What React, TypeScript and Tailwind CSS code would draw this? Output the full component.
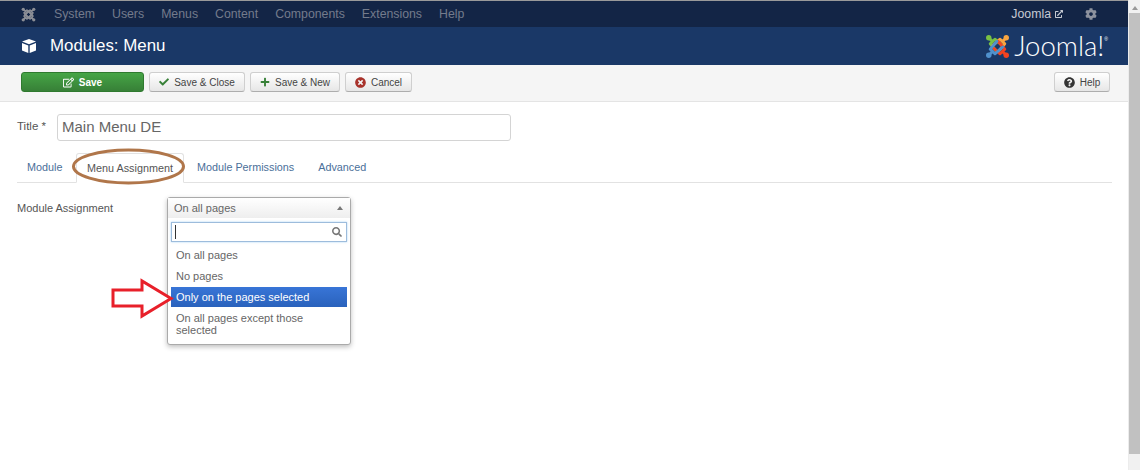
import React from "react";
import { FaCheck, FaPlus, FaSearch, FaCog, FaQuestionCircle, FaTimesCircle, FaRegEdit, FaExternalLinkAlt } from "react-icons/fa";

function Btn({ children, w, green }: { children: React.ReactNode; w: string; green?: boolean }) {
  return (
    <div
      className={
        "h-[20px] flex items-center justify-center gap-[5px] rounded-[3px] border text-[10px] " +
        w +
        (green
          ? " bg-gradient-to-b from-[#46a546] to-[#378037] border-[#2f7a2f] text-white font-bold"
          : " bg-gradient-to-b from-[#ffffff] to-[#e6e6e6] border-[#cfcfcf] border-b-[#adadad] text-[#444]")
      }
    >
      {children}
    </div>
  );
}

function JoomlaLogo({ size, mono }: { size: number; mono?: boolean }) {
  const c = mono ? ["#8a8d95", "#8a8d95", "#8a8d95", "#8a8d95"] : ["#7ac143", "#f9a541", "#f44321", "#5091cd"];
  const rot = [0, 90, 180, 270];
  return (
    <svg width={size} height={size} viewBox="0 0 24 24" fill="none" strokeWidth="2.8" strokeLinecap="round" strokeLinejoin="round">
      {rot.map((r, i) => (
        <g key={i} transform={`rotate(${r} 12 12)`}>
          <path d="M11.5 17 L5 9.5 L9.5 5 L17 11.5 M3.8 3.8 L7 7" stroke={c[i]} />
          <circle cx="3.6" cy="3.6" r="2.6" fill={c[i]} />
        </g>
      ))}
    </svg>
  );
}

export default function App() {
  return (
    <div className="relative flex h-[470px] w-[1140px] overflow-hidden bg-white font-['Liberation_Sans',Arial,sans-serif] text-[#333]">
      <div className="flex w-[1128px] flex-col">
        {/* navbar */}
        <div className="flex h-[27px] items-center border-t border-[#9a9a9a] bg-[#132546] pl-[21px] pr-[31px] text-[12.3px] text-[#737b8c]">
          <JoomlaLogo size={15} mono />
          <div className="ml-[18px] flex gap-[17px]">
            <span>System</span>
            <span>Users</span>
            <span>Menus</span>
            <span>Content</span>
            <span>Components</span>
            <span>Extensions</span>
            <span>Help</span>
          </div>
          <div className="ml-auto flex items-center">
            <span className="text-[#c6cad3]">Joomla</span>
            <FaExternalLinkAlt size={8} className="ml-[4px] text-[#c6cad3]" />
            <FaCog size={12} className="ml-[22px] text-[#8d929e]" />
          </div>
        </div>
        {/* header */}
        <div className="flex h-[38px] items-center bg-[#1a3867] pl-[21px] pr-[20px] text-white">
          <svg width="16" height="16" viewBox="0 0 16 16" fill="white">
            <path d="M8 1 L15 3.6 L8 6.2 L1 3.6 Z" />
            <path d="M1 5 L7.3 7.4 V15 L1 12.4 Z" />
            <path d="M15 5 L8.7 7.4 V15 L15 12.4 Z" />
          </svg>
          <span className="ml-[13px] text-[16.9px] leading-none">Modules: Menu</span>
          <div className="ml-auto flex items-center gap-[4px]">
            <JoomlaLogo size={25} />
            <span className="font-['Lato',sans-serif] text-[27.5px] font-light leading-none">Joomla!</span>
            <span className="-ml-[4px] -mt-[14px] text-[5px] leading-none">®</span>
          </div>
        </div>
        {/* toolbar */}
        <div className="flex h-[37px] items-center gap-[5px] border-b border-[#e4e4e4] bg-[#f5f5f5] pb-[2px] pl-[21px] pr-[18px]">
          <Btn w="w-[123px]" green>
            <FaRegEdit size={11} />
            <span>Save</span>
          </Btn>
          <Btn w="w-[96px]">
            <FaCheck size={10} className="text-[#378037]" />
            <span>Save &amp; Close</span>
          </Btn>
          <Btn w="w-[90px]">
            <FaPlus size={10} className="text-[#378037]" />
            <span>Save &amp; New</span>
          </Btn>
          <Btn w="w-[67px]">
            <FaTimesCircle size={11} className="text-[#a8322b]" />
            <span>Cancel</span>
          </Btn>
          <div className="ml-auto">
            <Btn w="w-[56px]">
              <FaQuestionCircle size={11} className="text-[#333]" />
              <span>Help</span>
            </Btn>
          </div>
        </div>
        {/* form */}
        <div className="flex flex-col px-[17px]">
          <div className="mt-[12px] flex h-[27px] items-center">
            <label className="w-[40px] pb-[1px] text-[11.5px] text-[#555]">Title *</label>
            <div className="flex h-[27px] w-[454px] items-center rounded-[3px] border border-[#d4d4d4] pl-[4px] text-[15px] text-[#666]">
              Main Menu DE
            </div>
          </div>
          {/* tabs */}
          <div className="mt-[12px] flex h-[30px] w-[1095px] border-b border-[#e2e2e2] text-[10.8px] text-[#4a6f99]">
            <div className="flex h-[29px] w-[59px] items-center pl-[10px]">Module</div>
            <div className="-mb-px flex h-[30px] w-[108px] items-center justify-center rounded-t-[3px] border border-[#e2e2e2] border-b-white bg-white text-[#555]">
              Menu Assignment
            </div>
            <div className="ml-[13px] flex h-[29px] items-center">Module Permissions</div>
            <div className="ml-[24px] flex h-[29px] items-center">Advanced</div>
          </div>
          {/* assignment */}
          <div className="mt-[14px] flex">
            <label className="w-[150px] pt-[3px] text-[11px] text-[#555]">Module Assignment</label>
            <div className="flex h-[148px] w-[184px] flex-col rounded-[3px] border border-[#aaa] bg-white text-[11px] text-[#666] shadow-[0_2px_5px_rgba(0,0,0,0.25)]">
              <div className="flex h-[20px] items-center justify-between bg-gradient-to-b from-white to-[#eee] pl-[6px] pr-[7px]">
                <span>On all pages</span>
                <span className="h-0 w-0 border-x-[3.5px] border-b-[4px] border-x-transparent border-b-[#777]" />
              </div>
              <div className="mx-[3px] mt-[4px] flex h-[20px] items-center justify-between border border-[#9dbcdc] pl-[3px] pr-[4px] shadow-[0_0_2px_rgba(82,168,236,0.5)]">
                <span className="h-[14px] w-px bg-[#333]" />
                <FaSearch size={10} className="text-[#777]" />
              </div>
              <div className="mx-[3px] mt-[2px] flex flex-col leading-[12px]">
                <div className="flex h-[21px] items-center pl-[5px]">On all pages</div>
                <div className="flex h-[21px] items-center pl-[5px]">No pages</div>
                <div className="mt-[1px] flex h-[20px] items-center bg-gradient-to-b from-[#3875d7] to-[#2a62bc] pl-[5px] text-white">
                  Only on the pages selected
                </div>
                <div className="px-[5px] pt-[5px]">On all pages except those selected</div>
              </div>
            </div>
          </div>
        </div>
      </div>
      {/* scrollbar */}
      <div className="flex w-[12px] flex-col border-l border-[#ececec] bg-[#f1f1f1]">
        <div className="flex h-[13px] items-center justify-center pt-[2px]">
          <span className="h-0 w-0 border-x-[3.5px] border-b-[4px] border-x-transparent border-b-[#999]" />
        </div>
        <div className="h-[441px] bg-[#c1c1c1]" />
      </div>
      {/* annotations */}
      <svg className="absolute left-0 top-0" width="1140" height="470" fill="none">
        <ellipse cx="128.5" cy="166.5" rx="55" ry="16.5" stroke="#b0764a" strokeWidth="3" />
        <path d="M113 290 H142 V281 L171 298.5 L142 316 V306 H113 Z" stroke="#e8202a" strokeWidth="3" fill="white" />
      </svg>
    </div>
  );
}
